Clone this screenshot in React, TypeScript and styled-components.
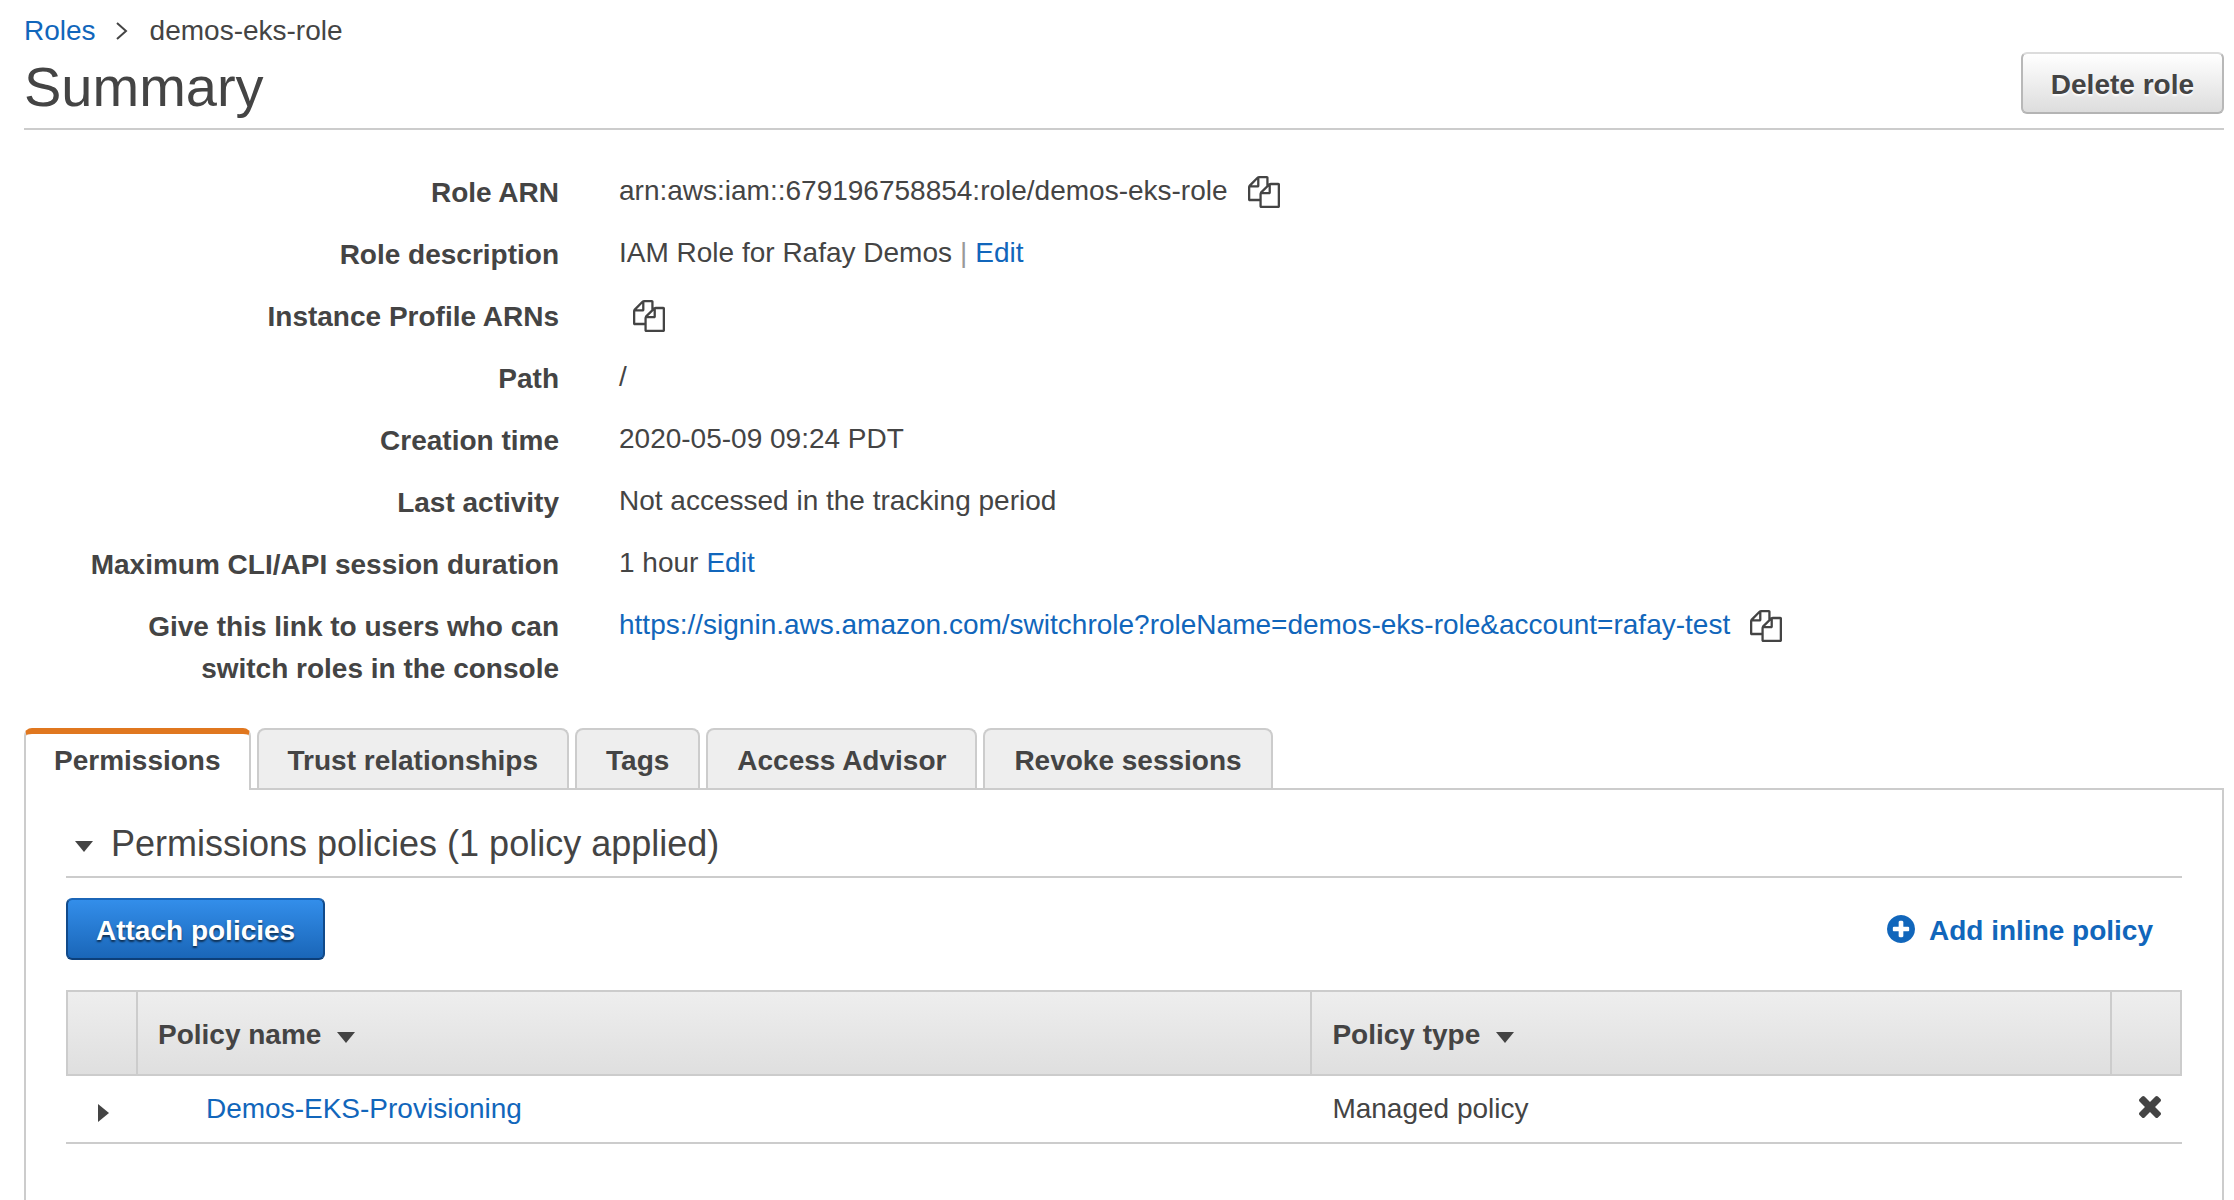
import React, { useState } from "react";
import styled, { createGlobalStyle, css } from "styled-components";

const color = {
  text: "#444444",
  link: "#1166bb",
  line: "#cccccc",
  accent: "#e0771f",
  tab: "#eeeeee",
};

const GlobalStyle = createGlobalStyle`
  *, *::before, *::after { box-sizing: border-box; }
  body {
    margin: 0;
    background: #ffffff;
    color: ${color.text};
    font-family: "Liberation Sans", Arial, Helvetica, sans-serif;
    font-size: 28px;
    line-height: 42px;
  }
  button { font: inherit; color: inherit; }
`;

const Page = styled.main`
  display: flex;
  flex-direction: column;
  min-height: 100vh;
  padding: 10px 10px 0 24px;
`;

const Link = styled.a`
  color: ${color.link};
  text-decoration: none;
  &:hover { text-decoration: underline; }
`;

const Breadcrumb = styled.nav`
  display: flex;
  align-items: center;
`;

const Chevron = styled.svg`
  width: 12px;
  height: 18px;
  margin: 0 22px 0 20px;
  fill: none;
  stroke: ${color.text};
  stroke-width: 2;
`;

const Header = styled.header`
  display: flex;
  align-items: flex-start;
  justify-content: space-between;
  padding-bottom: 6px;
  border-bottom: 2px solid ${color.line};
`;

const Title = styled.h1`
  margin: 0;
  font-size: 56px;
  font-weight: 400;
  line-height: 70px;
`;

const Button = styled.button<{ $primary?: boolean }>`
  padding: 10px 28px 6px;
  border: 2px solid;
  border-radius: 6px;
  font-weight: 700;
  white-space: nowrap;
  cursor: pointer;
  ${({ $primary }) =>
    $primary
      ? css`
          color: #ffffff;
          border-color: #1b66b8 #114a8a #0c3f7a;
          background: linear-gradient(#338eea, #1a66b8) padding-box, #114a8a;
          text-shadow: 0 2px 2px rgba(0, 0, 0, 0.6);
        `
      : css`
          color: ${color.text};
          border-color: #dcdcdc #b8b8b8 #b4b4b4;
          background: linear-gradient(#ffffff, #dddddd) padding-box, #b8b8b8;
          text-shadow: 0 2px 2px #ffffff;
        `}
`;

const Details = styled.dl`
  display: flex;
  flex-direction: column;
  gap: 20px;
  margin: 0;
  padding: 40px 0 38px;
`;

const DetailRow = styled.div`
  display: grid;
  grid-template-columns: 535px 1fr;
  column-gap: 60px;
  height: 42px;
  &:last-child { height: auto; }
`;

const Label = styled.dt`
  padding: 2px 0 0 40px;
  font-weight: 700;
  text-align: right;
`;

const Value = styled.dd`
  display: flex;
  align-items: flex-start;
  gap: 8px;
  margin: 0;
`;

const Divider = styled.span`
  color: #999999;
`;

const IconButton = styled.button<{ $inset?: number }>`
  display: inline-flex;
  align-items: center;
  padding: 0;
  margin-left: ${({ $inset }) => $inset ?? 0}px;
  border: 0;
  background: none;
  cursor: pointer;
`;

const CopyButton = styled(IconButton)`
  padding: 6px 0 4px;
`;

const ExpandButton = styled(IconButton)`
  vertical-align: middle;
`;

const Icon = styled.svg<{ $size: number }>`
  display: block;
  width: ${({ $size }) => $size}px;
  height: ${({ $size }) => $size}px;
  fill: currentColor;
`;

const Arrow = styled.svg<{ $side?: boolean }>`
  display: block;
  width: ${({ $side }) => ($side ? 11 : 18)}px;
  height: ${({ $side }) => ($side ? 18 : 11)}px;
  margin-top: 4px;
  fill: ${color.text};
`;

const Tabs = styled.div`
  display: flex;
  gap: 6px;
`;

const Tab = styled.button<{ $active: boolean }>`
  padding: 10px 29px 6px;
  border: 2px solid ${color.line};
  border-bottom: 0;
  border-radius: 8px 8px 0 0;
  background: ${color.tab};
  font-weight: 700;
  white-space: nowrap;
  cursor: pointer;
  ${({ $active }) =>
    $active &&
    css`
      position: relative;
      padding: 6px 28px 8px;
      margin-bottom: -2px;
      border-top: 6px solid ${color.accent};
      background: #ffffff;
    `}
`;

const Panel = styled.section`
  flex: 1;
  padding: 32px 40px 56px;
  border: 2px solid ${color.line};
  border-bottom: 0;
`;

const SectionTitle = styled.h2`
  margin: 0 0 20px;
  padding-bottom: 10px;
  border-bottom: 2px solid ${color.line};
  font-size: 36px;
  font-weight: 400;
  line-height: 44px;
`;

const Toggle = styled.button`
  display: flex;
  align-items: center;
  gap: 18px;
  padding: 0 0 0 9px;
  border: 0;
  background: none;
  cursor: pointer;
`;

const Toolbar = styled.div`
  display: flex;
  align-items: center;
  justify-content: space-between;
  margin-bottom: 30px;
`;

const InlinePolicy = styled.a`
  display: flex;
  align-items: center;
  gap: 14px;
  padding-right: 29px;
  color: ${color.link};
  font-weight: 700;
  text-decoration: none;
`;

const InlinePolicyText = styled.span`
  padding-top: 4px;
`;

const Table = styled.table`
  width: 100%;
  table-layout: fixed;
  border-collapse: separate;
  border-spacing: 0;
`;

const Col = styled.col<{ $width?: string }>`
  width: ${({ $width }) => $width ?? "auto"};
`;

const HeadCell = styled.th`
  padding: 22px 20px 18px;
  border: 2px solid ${color.line};
  border-left-width: 0;
  background: linear-gradient(#eeeeee, #dfdfdf);
  text-align: left;
  &:first-child { border-left-width: 2px; }
`;

const SortButton = styled(IconButton)`
  gap: 16px;
  font-weight: 700;
`;

const Cell = styled.td<{ $indent: number }>`
  padding: 12px 0 12px ${({ $indent }) => $indent}px;
  border-bottom: 2px solid ${color.line};
`;

const CopyIcon = () => (
  <Icon $size={32} viewBox="0 0 1792 1792" aria-hidden="true">
    <path d="M1696 384q40 0 68 28t28 68v1216q0 40-28 68t-68 28h-960q-40 0-68-28t-28-68v-288h-544q-40 0-68-28t-28-68v-672q0-40 20-88t48-76l408-408q28-28 76-48t88-20h416q40 0 68 28t28 68v328q68-40 128-40h416zm-544 213l-299 299h299v-299zm-640-384l-299 299h299v-299zm196 647l316-316v-416h-384v416q0 40-28 68t-68 28h-416v640h512v-256q0-40 20-88t48-76zm956 804v-1152h-384v416q0 40-28 68t-68 28h-416v640h896z" />
  </Icon>
);

const PlusIcon = () => (
  <Icon $size={28} viewBox="128 128 1536 1536" aria-hidden="true">
    <path d="M1344 960v-128q0-26-19-45t-45-19h-256v-256q0-26-19-45t-45-19h-128q-26 0-45 19t-19 45v256h-256q-26 0-45 19t-19 45v128q0 26 19 45t45 19h256v256q0 26 19 45t45 19h128q26 0 45-19t19-45v-256h256q26 0 45-19t19-45zm320-64q0 209-103 385.5t-279.5 279.5-385.5 103-385.5-103-279.5-279.5-103-385.5 103-385.5 279.5-279.5 385.5-103 385.5 103 279.5 279.5 103 385.5z" />
  </Icon>
);

const RemoveIcon = () => (
  <Icon $size={22} viewBox="302 366 1188 1188" aria-hidden="true">
    <path d="M1490 1322q0 40-28 68l-136 136q-28 28-68 28t-68-28l-294-294-294 294q-28 28-68 28t-68-28l-136-136q-28-28-28-68t28-68l294-294-294-294q-28-28-28-68t28-68l136-136q28-28 68-28t68 28l294 294 294-294q28-28 68-28t68 28l136 136q28 28 28 68t-28 68l-294 294 294 294q28 28 28 68z" />
  </Icon>
);

const DownArrow = () => (
  <Arrow viewBox="0 0 18 11" aria-hidden="true">
    <path d="M0 0h18l-9 11z" />
  </Arrow>
);

const RightArrow = () => (
  <Arrow $side viewBox="0 0 11 18" aria-hidden="true">
    <path d="M0 0v18l11-9z" />
  </Arrow>
);

const tabs = ["Permissions", "Trust relationships", "Tags", "Access Advisor", "Revoke sessions"];

const switchUrl =
  "https://signin.aws.amazon.com/switchrole?roleName=demos-eks-role&account=rafay-test";

const details: { label: string; value: React.ReactNode }[] = [
  {
    label: "Role ARN",
    value: (
      <>
        arn:aws:iam::679196758854:role/demos-eks-role
        <CopyButton $inset={12} aria-label="Copy role ARN"><CopyIcon /></CopyButton>
      </>
    ),
  },
  {
    label: "Role description",
    value: (
      <>
        IAM Role for Rafay Demos <Divider>|</Divider> <Link href="#description">Edit</Link>
      </>
    ),
  },
  {
    label: "Instance Profile ARNs",
    value: <CopyButton $inset={14} aria-label="Copy instance profile ARNs"><CopyIcon /></CopyButton>,
  },
  { label: "Path", value: "/" },
  { label: "Creation time", value: "2020-05-09 09:24 PDT" },
  { label: "Last activity", value: "Not accessed in the tracking period" },
  {
    label: "Maximum CLI/API session duration",
    value: (
      <>
        1 hour <Link href="#duration">Edit</Link>
      </>
    ),
  },
  {
    label: "Give this link to users who can switch roles in the console",
    value: (
      <>
        <Link href={switchUrl}>{switchUrl}</Link>
        <CopyButton $inset={12} aria-label="Copy switch role link"><CopyIcon /></CopyButton>
      </>
    ),
  },
];

export default function App() {
  const [active, setActive] = useState(tabs[0]);
  return (
    <>
      <GlobalStyle />
      <Page>
        <Breadcrumb aria-label="Breadcrumb">
          <Link href="#roles">Roles</Link>
          <Chevron viewBox="0 0 12 18" aria-hidden="true">
            <path d="M1 1l9 8-9 8" />
          </Chevron>
          <span>demos-eks-role</span>
        </Breadcrumb>
        <Header>
          <Title>Summary</Title>
          <Button>Delete role</Button>
        </Header>
        <Details>
          {details.map(({ label, value }) => (
            <DetailRow key={label}>
              <Label>{label}</Label>
              <Value>{value}</Value>
            </DetailRow>
          ))}
        </Details>
        <Tabs role="tablist">
          {tabs.map((name) => (
            <Tab
              key={name}
              role="tab"
              aria-selected={name === active}
              $active={name === active}
              onClick={() => setActive(name)}
            >
              {name}
            </Tab>
          ))}
        </Tabs>
        <Panel role="tabpanel" aria-label={active}>
          <SectionTitle>
            <Toggle aria-expanded="true">
              <DownArrow />
              Permissions policies (1 policy applied)
            </Toggle>
          </SectionTitle>
          <Toolbar>
            <Button $primary>Attach policies</Button>
            <InlinePolicy href="#inline">
              <PlusIcon />
              <InlinePolicyText>Add inline policy</InlinePolicyText>
            </InlinePolicy>
          </Toolbar>
          <Table>
            <colgroup>
              <Col $width="72px" />
              <Col $width="55.5%" />
              <Col />
              <Col $width="70px" />
            </colgroup>
            <thead>
              <tr>
                <HeadCell aria-label="Expand" />
                <HeadCell scope="col">
                  <SortButton>Policy name<DownArrow /></SortButton>
                </HeadCell>
                <HeadCell scope="col">
                  <SortButton>Policy type<DownArrow /></SortButton>
                </HeadCell>
                <HeadCell aria-label="Remove" />
              </tr>
            </thead>
            <tbody>
              <tr>
                <Cell $indent={32}>
                  <ExpandButton aria-label="Expand policy"><RightArrow /></ExpandButton>
                </Cell>
                <Cell $indent={68}>
                  <Link href="#policy">Demos-EKS-Provisioning</Link>
                </Cell>
                <Cell $indent={20}>Managed policy</Cell>
                <Cell $indent={27}>
                  <IconButton aria-label="Detach policy"><RemoveIcon /></IconButton>
                </Cell>
              </tr>
            </tbody>
          </Table>
        </Panel>
      </Page>
    </>
  );
}
